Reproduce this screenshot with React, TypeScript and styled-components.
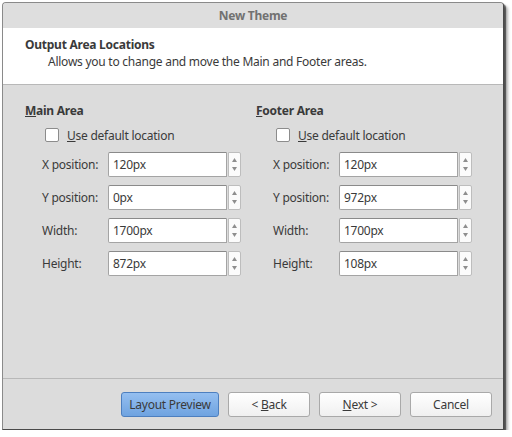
import React from "react";
import styled, { createGlobalStyle } from "styled-components";

const Global = createGlobalStyle`
  html, body { margin: 0; padding: 0; background: #ffffff; }
  body { font-family: "Noto Sans", "DejaVu Sans", sans-serif; font-size: 12px; letter-spacing: -0.25px; color: #3a3a3a; }
`;

const Window = styled.div`
  box-sizing: border-box;
  margin: 2px 0 0 2px;
  width: 502px;
  height: 428px;
  display: flex;
  flex-direction: column;
  border: 1px solid #8a8a8a;
  border-right-color: #4a4a4a;
  border-bottom-color: #4a4a4a;
  border-radius: 4px 4px 0 0;
  box-shadow: 2px 2px 1px rgba(0, 0, 0, 0.55), 4px 4px 3px rgba(0, 0, 0, 0.3);
  overflow: hidden;
  background: #dcdcdc;
`;

const TitleBar = styled.div`
  height: 25px;
  flex: none;
  background: #dedede;
  display: flex;
  align-items: center;
  justify-content: center;
  font-weight: bold;
  font-size: 12px;
  color: #717171;
`;

const Header = styled.div`
  flex: none;
  height: 57px;
  background: #ffffff;
  border-bottom: 1px solid #b8b8b8;
  padding: 9px 0 0 22px;
  box-sizing: border-box;
`;

const HeaderTitle = styled.div`
  font-weight: bold;
  font-size: 12px;
  line-height: 16px;
  color: #3a3a3a;
`;

const HeaderSub = styled.div`
  padding-left: 23px;
  line-height: 16px;
  margin-top: 1px;
  color: #3a3a3a;
`;

const Body = styled.div`
  flex: 1;
  display: grid;
  grid-template-columns: 231px 1fr;
  padding: 18px 0 0 22px;
  border-bottom: 1px solid #b8b8b8;
`;

const Column = styled.div`
  display: flex;
  flex-direction: column;
`;

const GroupTitle = styled.div`
  font-weight: bold;
  line-height: 16px;
  height: 16px;
`;

const CheckRow = styled.label`
  display: flex;
  align-items: center;
  gap: 8px;
  margin: 8px 0 0 20px;
  height: 16px;
`;

const Box = styled.span`
  width: 12px;
  height: 12px;
  border: 1px solid #8c8c8c;
  border-radius: 2px;
  background: #ffffff;
  display: inline-block;
`;

const Fields = styled.div`
  display: grid;
  grid-template-columns: 65px 119px 13px;
  column-gap: 1px;
  row-gap: 8px;
  margin: 9px 0 0 17px;
  align-items: center;
`;

const Label = styled.div`
  line-height: 25px;
`;

const Input = styled.div`
  box-sizing: border-box;
  height: 25px;
  background: #ffffff;
  border: 1px solid #a4a4a4;
  border-top-color: #8a8a8a;
  border-radius: 2px 0 0 2px;
  padding-left: 4px;
  line-height: 23px;
  color: #3a3a3a;
`;

const Spin = styled.div`
  box-sizing: border-box;
  height: 25px;
  background: #fbfbfb;
  border: 1px solid #bdbdbd;
  border-radius: 0 2px 2px 0;
  display: flex;
  flex-direction: column;
  align-items: center;
  justify-content: space-between;
  padding: 5px 0 5px;
`;

const Footer = styled.div`
  flex: none;
  height: 50px;
  display: flex;
  justify-content: flex-end;
  align-items: flex-start;
  gap: 9px;
  padding: 13px 11px 0 0;
  box-sizing: border-box;
`;

const Button = styled.button<{ $primary?: boolean; $w: number }>`
  box-sizing: border-box;
  width: ${(p) => p.$w}px;
  height: 25px;
  font-family: inherit;
  font-size: 12px;
  letter-spacing: -0.25px;
  color: #3a3a3a;
  border-radius: 3px;
  border: 1px solid ${(p) => (p.$primary ? "#4d7fbf" : "#a9a9a9")};
  background: ${(p) =>
    p.$primary
      ? "linear-gradient(#95bff0, #6fa3e0)"
      : "linear-gradient(#ffffff, #f0f0f0)"};
  padding: 0;
`;

const U = styled.span`
  text-decoration: underline;
`;

function Arrow({ up }: { up?: boolean }) {
  return (
    <svg width="5" height="4" viewBox="0 0 5 4">
      <path d={up ? "M0 4 L2.5 0 L5 4 Z" : "M0 0 L2.5 4 L5 0 Z"} fill="#8e8e8e" />
    </svg>
  );
}

function Field({ label, value }: { label: string; value: string }) {
  return (
    <>
      <Label>{label}</Label>
      <Input>{value}</Input>
      <Spin>
        <Arrow up />
        <Arrow />
      </Spin>
    </>
  );
}

function Group({
  m,
  rest,
  values,
}: {
  m: string;
  rest: string;
  values: string[];
}) {
  return (
    <Column>
      <GroupTitle>
        <U>{m}</U>
        {rest}
      </GroupTitle>
      <CheckRow>
        <Box />
        <span>
          <U>U</U>se default location
        </span>
      </CheckRow>
      <Fields>
        <Field label="X position:" value={values[0]} />
        <Field label="Y position:" value={values[1]} />
        <Field label="Width:" value={values[2]} />
        <Field label="Height:" value={values[3]} />
      </Fields>
    </Column>
  );
}

export default function App() {
  return (
    <>
      <Global />
      <Window>
        <TitleBar>New Theme</TitleBar>
        <Header>
          <HeaderTitle>Output Area Locations</HeaderTitle>
          <HeaderSub>Allows you to change and move the Main and Footer areas.</HeaderSub>
        </Header>
        <Body>
          <Group m="M" rest="ain Area" values={["120px", "0px", "1700px", "872px"]} />
          <Group m="F" rest="ooter Area" values={["120px", "972px", "1700px", "108px"]} />
        </Body>
        <Footer>
          <Button $primary $w={98}>Layout Preview</Button>
          <Button $w={82}>
            &lt; <U>B</U>ack
          </Button>
          <Button $w={82}>
            <U>N</U>ext &gt;
          </Button>
          <Button $w={82}>Cancel</Button>
        </Footer>
      </Window>
    </>
  );
}
